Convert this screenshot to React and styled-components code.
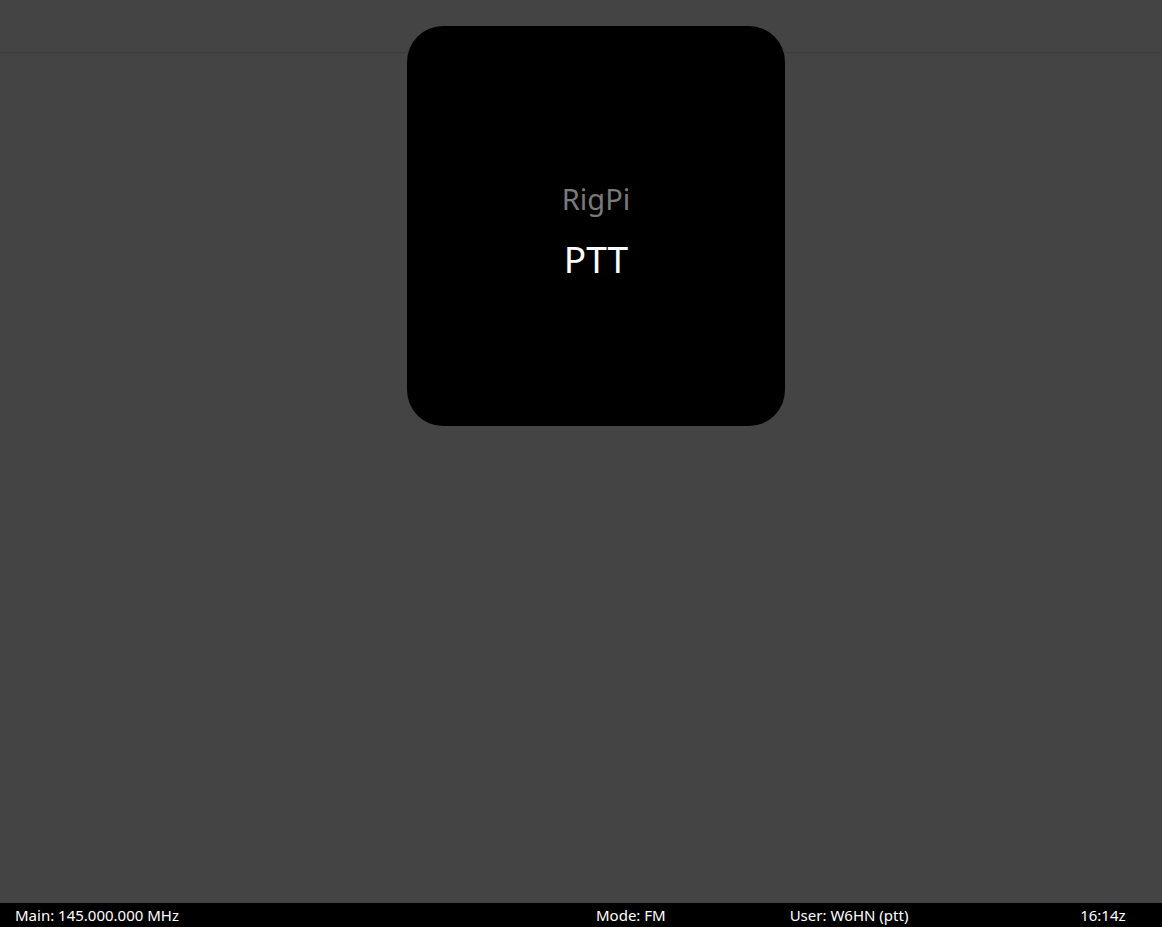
import React from 'react'
import styled, { createGlobalStyle } from 'styled-components'

const Global = createGlobalStyle`
  html, body {
    margin: 0;
    padding: 0;
    height: 100%;
    background: #444444;
  }
  body {
    font-family: "Noto Sans", "Open Sans", "Liberation Sans", sans-serif;
  }
  #root {
    height: 100%;
  }
`

const Page = styled.div`
  display: flex;
  flex-direction: column;
  height: 100vh;
  background: #444444;
`

const TopBar = styled.div`
  height: 52px;
  flex-shrink: 0;
  border-bottom: 1px solid #3b3b3b;
`

const Main = styled.div`
  flex: 1;
  display: flex;
  justify-content: center;
  align-items: flex-start;
  padding-left: 30px;
`

const Panel = styled.div`
  width: 378px;
  height: 400px;
  margin-top: -27px;
  background: #000;
  border-radius: 36px;
  display: flex;
  flex-direction: column;
  align-items: center;
  padding-top: 152px;
  box-sizing: border-box;
`

const Brand = styled.div`
  color: #7a7a7a;
  font-size: 29px;
  line-height: 42px;
`

const Title = styled.div`
  color: #fff;
  font-size: 37px;
  line-height: 48px;
  margin-top: 15px;
`

const StatusBar = styled.div`
  height: 24px;
  flex-shrink: 0;
  background: #000;
  display: grid;
  grid-template-columns: 6fr 2fr 3fr 1fr;
  align-items: center;
`

const Cell = styled.div`
  padding: 0 15px;
  color: #fff;
  font-size: 15px;
  white-space: nowrap;
`

export default function App() {
  return (
    <Page>
      <Global />
      <TopBar />
      <Main>
        <Panel>
          <Brand>RigPi</Brand>
          <Title>PTT</Title>
        </Panel>
      </Main>
      <StatusBar>
        <Cell>Main: 145.000.000 MHz</Cell>
        <Cell>Mode: FM</Cell>
        <Cell>User: W6HN (ptt)</Cell>
        <Cell>16:14z</Cell>
      </StatusBar>
    </Page>
  )
}
